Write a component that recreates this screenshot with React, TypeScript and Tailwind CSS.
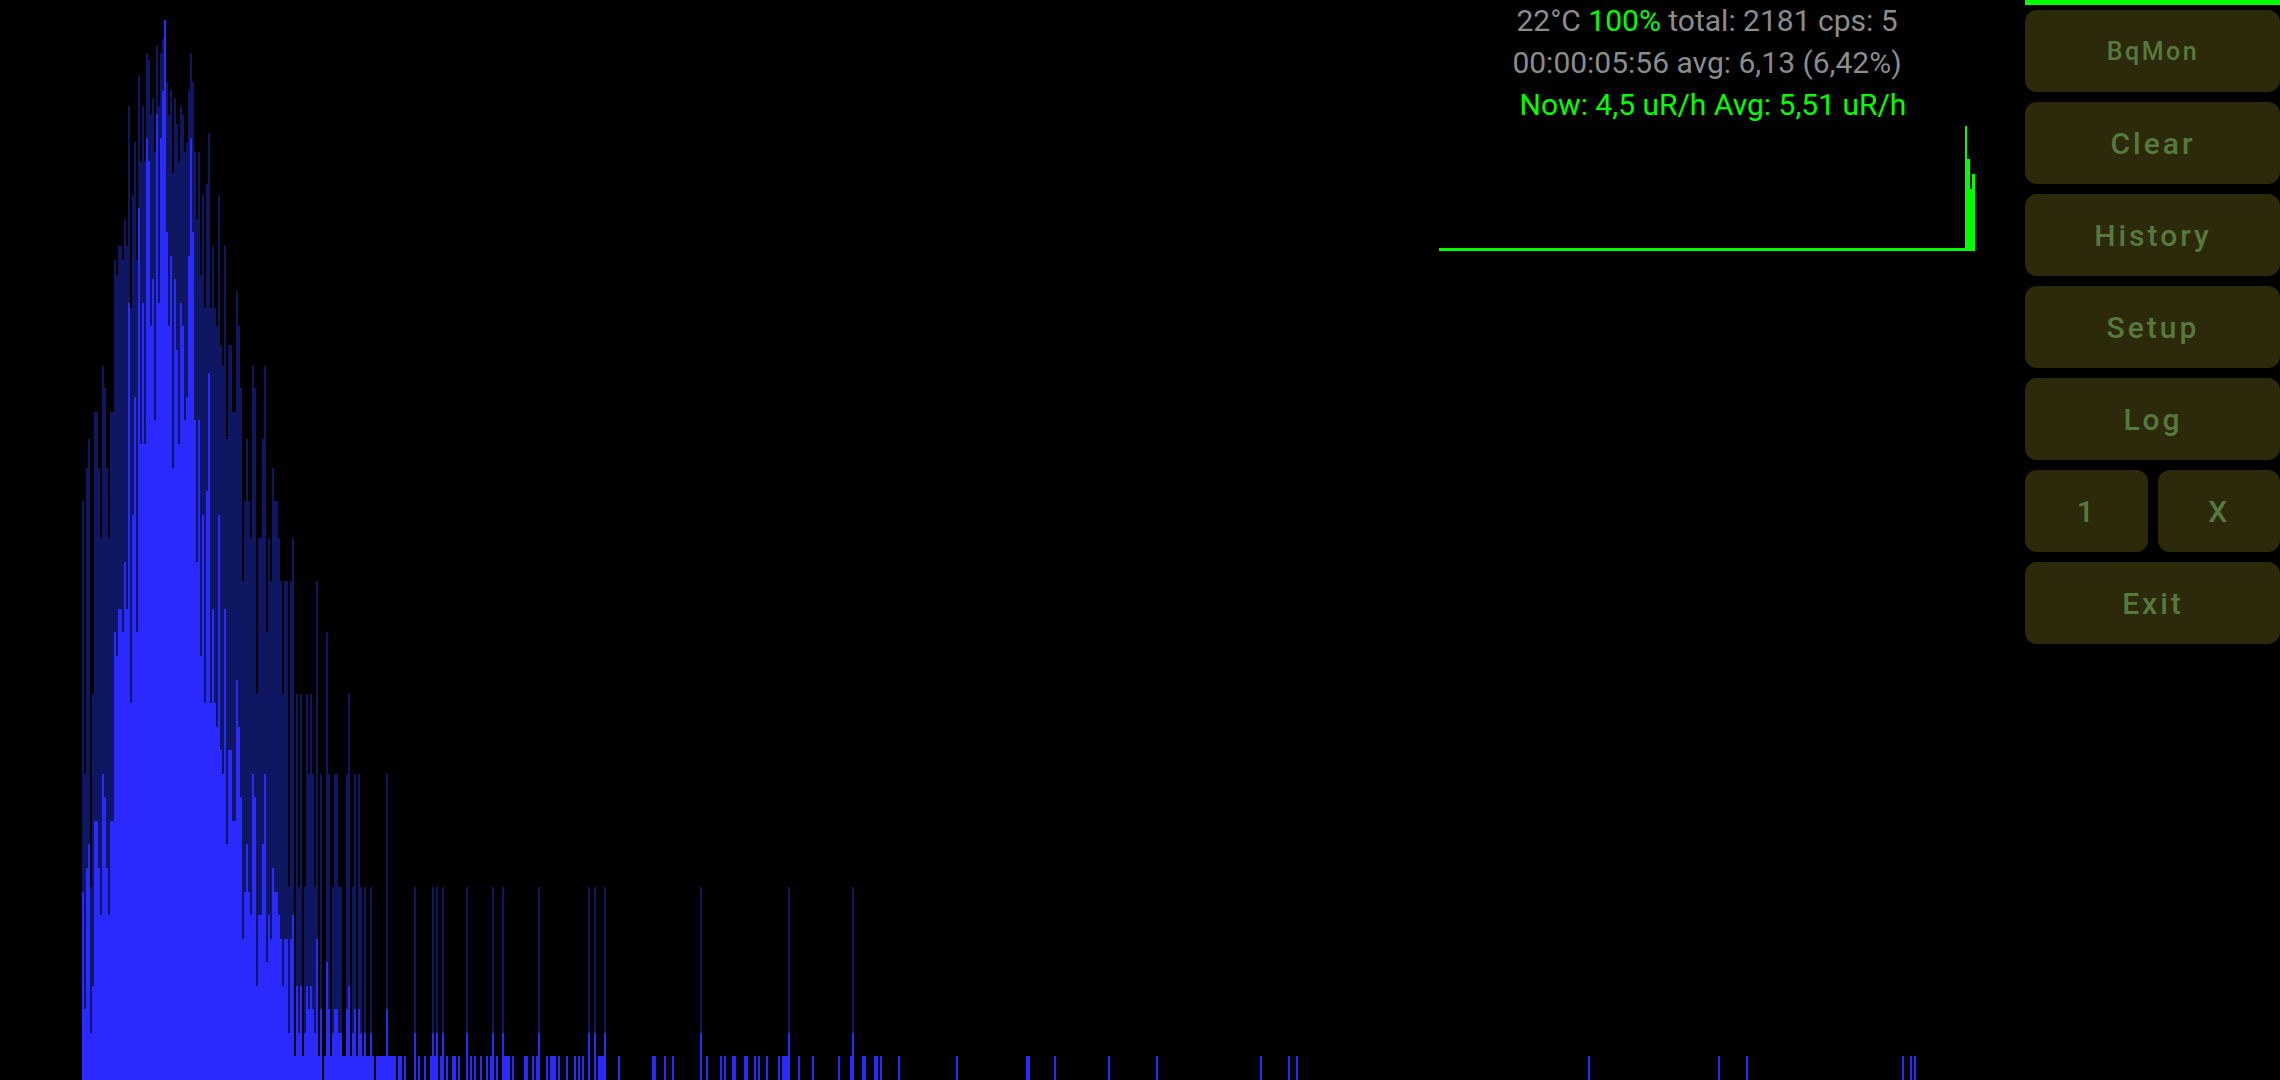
import React from 'react';

// histogram columns: 2px wide, first one at x=82. [peak hold top, current top]
const leftCols: [number, number][] = [
  [501, 892], [774, 1009], [468, 868], [439, 844], [887, 1033], [694, 986], [412, 821], [412, 821],
  [468, 868], [538, 915], [366, 774], [388, 797], [468, 868], [538, 915], [412, 821], [412, 821],
  [260, 632], [275, 656], [246, 609], [246, 609], [260, 632], [219, 562], [246, 609], [106, 303],
  [308, 703], [195, 515], [142, 397], [260, 632], [75, 208], [162, 444], [106, 303], [162, 444],
  [53, 138], [60, 161], [115, 326], [98, 279], [152, 420], [46, 114], [106, 303], [53, 138],
  [39, 91], [20, 20], [82, 232], [115, 326], [90, 256], [173, 468], [98, 279], [124, 350],
  [162, 444], [106, 303], [115, 326], [152, 420], [142, 397], [90, 256], [53, 138], [82, 232],
  [152, 420], [219, 562], [152, 420], [275, 656], [195, 515], [308, 703], [184, 491], [133, 373],
  [308, 703], [246, 609], [308, 703], [326, 727], [195, 515], [345, 750], [366, 774], [246, 609],
  [439, 844], [345, 750], [345, 750], [412, 821], [412, 821], [291, 680], [326, 727], [388, 797],
  [581, 939], [501, 892], [439, 844], [501, 892], [538, 915], [366, 774], [388, 797], [694, 986],
  [538, 915], [538, 915], [439, 844], [366, 774], [632, 962], [538, 915], [581, 939], [468, 868],
  [501, 892], [501, 892], [538, 915], [581, 939], [694, 986], [581, 939], [581, 939], [887, 1033],
  [581, 939], [538, 915],
];

// x: [peak hold top, current top] past the main hump
const tallCols: Record<number, [number, number]> = {
  296: [694, 986], 298: [887, 1033], 300: [694, 986], 304: [887, 1033], 306: [694, 986], 308: [774, 1009],
  310: [694, 986], 312: [774, 1009], 314: [887, 1033], 316: [581, 939], 320: [774, 1009], 326: [632, 962],
  328: [774, 1009], 332: [887, 1033], 334: [774, 1009], 336: [774, 1009], 338: [887, 1033], 340: [887, 1033],
  346: [774, 1009], 348: [694, 986], 352: [887, 1033], 354: [774, 1009], 358: [774, 1009], 360: [887, 1033],
  364: [887, 1033], 370: [887, 1033], 386: [774, 1009], 414: [887, 1033], 432: [887, 1033], 436: [887, 1033],
  442: [887, 1033], 466: [887, 1033], 492: [887, 1033], 502: [887, 1033], 538: [887, 1033], 588: [887, 1033],
  594: [887, 1033], 604: [887, 1033], 700: [887, 1033], 788: [887, 1033], 852: [887, 1033],
};

// single count runs along the bottom, [from, to]
const baseRuns = [
  [294, 322], [324, 374], [376, 396], [398, 402], [404, 406], [414, 416], [418, 420], [424, 426], [430, 438],
  [440, 444], [446, 448], [452, 456], [458, 460], [466, 468], [470, 472], [474, 476], [480, 482], [486, 488],
  [490, 494], [496, 498], [502, 510], [512, 514], [524, 528], [532, 534], [536, 540], [546, 548], [550, 556],
  [558, 560], [566, 568], [574, 576], [578, 580], [582, 584], [588, 590], [594, 596], [598, 606], [618, 620],
  [652, 656], [664, 666], [672, 674], [700, 702], [706, 708], [720, 722], [724, 726], [732, 736], [744, 748],
  [754, 756], [758, 760], [766, 768], [778, 780], [782, 790], [798, 800], [812, 814], [838, 840], [850, 854],
  [862, 866], [874, 878], [880, 882], [898, 900], [956, 958], [1026, 1030], [1054, 1056], [1108, 1110],
  [1156, 1158], [1260, 1262], [1288, 1290], [1296, 1298], [1588, 1590], [1718, 1720], [1746, 1748],
  [1902, 1904], [1910, 1912], [1914, 1916],
];

function buildPaths() {
  let peak = '';
  let now = '';
  leftCols.forEach(([d, b], i) => {
    const x = 82 + i * 2;
    peak += `M${x} ${d}h2V1080h-2z`;
    now += `M${x} ${b}h2V1080h-2z`;
  });
  Object.entries(tallCols).forEach(([k, [d, b]]) => {
    const x = Number(k);
    peak += `M${x} ${d}h2V1080h-2z`;
    now += `M${x} ${b}h2V1080h-2z`;
  });
  baseRuns.forEach(([a, b]) => {
    now += `M${a} 1056H${b}V1080H${a}z`;
  });
  return { peak, now };
}

const paths = buildPaths();

function Spectrum() {
  return (
    <svg className="absolute inset-0" width="2025" height="1080" viewBox="0 0 2025 1080" shapeRendering="crispEdges">
      <path d={paths.peak} fill="#0f1763" />
      <path d={paths.now} fill="#2a2aff" />
    </svg>
  );
}

function RateChart() {
  return (
    <svg className="block" width="536" height="126" viewBox="1439 126 536 126" shapeRendering="crispEdges">
      <path d="M1439 248h526v3h-526z" fill="#00ff00" />
      <path d="M1965 126h2V251h-2zM1967 159h3V251h-3zM1970 189h2V251h-2zM1972 174h3V251h-3z" fill="#00ff00" />
    </svg>
  );
}

function PanelButton({ label, small }: { label: string; small?: boolean }) {
  return (
    <button
      className={
        small
          ? 'flex-1 h-[82px] pt-px pl-px rounded-[12px] bg-[#2d290b] text-[#567a3c] text-[25px] font-medium tracking-[2.5px]'
          : 'flex-1 h-[82px] pt-px pl-px rounded-[12px] bg-[#2d290b] text-[#567a3c] text-[30px] font-medium tracking-[3px]'
      }
    >
      {label}
    </button>
  );
}

export default function App() {
  return (
    <div className="flex w-[2280px] h-[1080px] bg-black overflow-hidden font-[Roboto,sans-serif]">
      {/* Main chart */}
      <div className="relative flex-1">
        <Spectrum />
        <div className="relative flex justify-end pr-[50px]">
          <div className="w-[536px]">
            <div className="text-center text-[30px] leading-[42px] text-[#8c8c8c] whitespace-nowrap">
              <div>
                22°C <span className="text-[#00ff00]">100%</span> total: 2181 cps: 5
              </div>
              <div>00:00:05:56 avg: 6,13 (6,42%)</div>
              <div className="pl-3 text-[#00ff00]">Now: 4,5 uR/h Avg: 5,51 uR/h</div>
            </div>
            <RateChart />
          </div>
        </div>
      </div>

      {/* Button panel */}
      <div className="flex-none w-[255px] flex flex-col">
        <div className="h-[5px] bg-[#00ff00]" />
        <div className="flex flex-col gap-[10px] pt-[5px]">
          <div className="flex"><PanelButton label="BqMon" small /></div>
          <div className="flex"><PanelButton label="Clear" /></div>
          <div className="flex"><PanelButton label="History" /></div>
          <div className="flex"><PanelButton label="Setup" /></div>
          <div className="flex"><PanelButton label="Log" /></div>
          <div className="flex gap-[10px]">
            <PanelButton label="1" />
            <PanelButton label="X" />
          </div>
          <div className="flex"><PanelButton label="Exit" /></div>
        </div>
      </div>
    </div>
  );
}
